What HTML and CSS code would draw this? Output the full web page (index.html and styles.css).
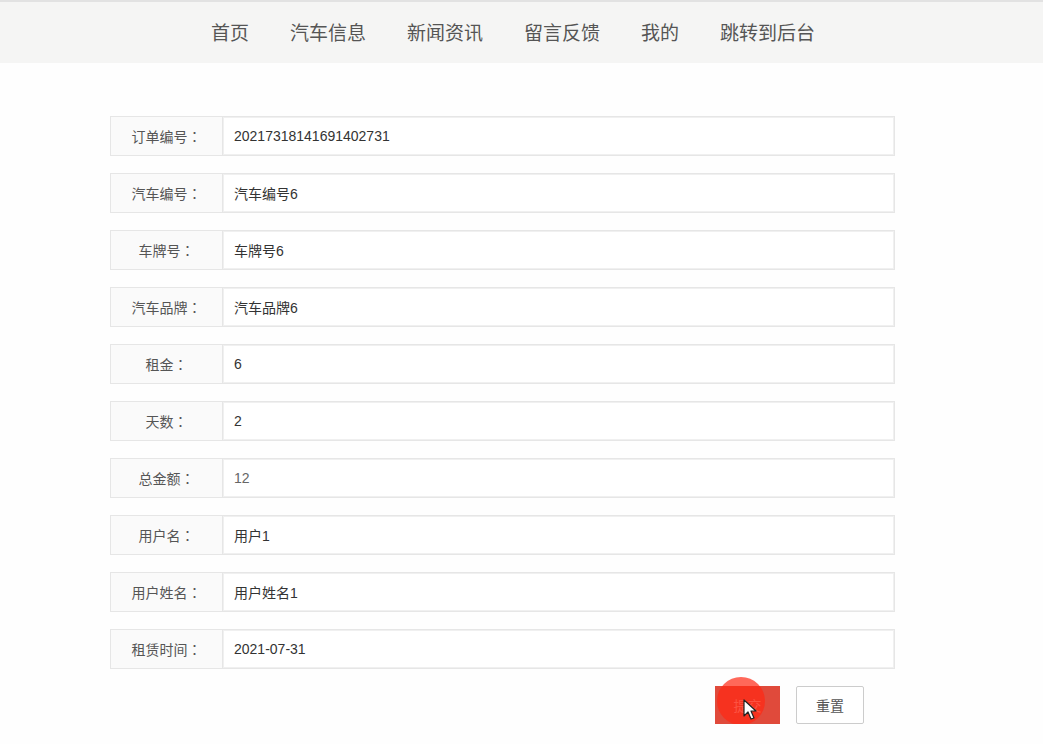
FILE: index.html
```html
<!DOCTYPE html>
<html lang="zh">
<head>
  <meta charset="UTF-8">
  <title>租赁订单</title>
  <link rel="stylesheet" href="styles.css">
</head>
<body>
  <div class="nav">
    <a class="nav-item" href="#">首页</a>
    <a class="nav-item" href="#">汽车信息</a>
    <a class="nav-item" href="#">新闻资讯</a>
    <a class="nav-item" href="#">留言反馈</a>
    <a class="nav-item" href="#">我的</a>
    <a class="nav-item" href="#">跳转到后台</a>
  </div>

  <form class="form">
    <div class="form-item">
      <label class="form-label">订单编号<span class="colon">：</span></label>
      <input class="form-input" type="text" value="20217318141691402731">
    </div>
    <div class="form-item">
      <label class="form-label">汽车编号<span class="colon">：</span></label>
      <input class="form-input" type="text" value="汽车编号6">
    </div>
    <div class="form-item">
      <label class="form-label">车牌号<span class="colon">：</span></label>
      <input class="form-input" type="text" value="车牌号6">
    </div>
    <div class="form-item">
      <label class="form-label">汽车品牌<span class="colon">：</span></label>
      <input class="form-input" type="text" value="汽车品牌6">
    </div>
    <div class="form-item">
      <label class="form-label">租金<span class="colon">：</span></label>
      <input class="form-input" type="text" value="6">
    </div>
    <div class="form-item">
      <label class="form-label">天数<span class="colon">：</span></label>
      <input class="form-input" type="text" value="2">
    </div>
    <div class="form-item">
      <label class="form-label">总金额<span class="colon">：</span></label>
      <input class="form-input readonly" type="text" value="12" readonly>
    </div>
    <div class="form-item">
      <label class="form-label">用户名<span class="colon">：</span></label>
      <input class="form-input" type="text" value="用户1">
    </div>
    <div class="form-item">
      <label class="form-label">用户姓名<span class="colon">：</span></label>
      <input class="form-input" type="text" value="用户姓名1">
    </div>
    <div class="form-item">
      <label class="form-label">租赁时间<span class="colon">：</span></label>
      <input class="form-input" type="text" value="2021-07-31">
    </div>
    <div class="form-buttons">
      <span class="btn-wrap">
        <button type="button" class="btn btn-submit">提交</button>
        <span class="click-dot"></span>
        <svg class="cursor" width="14" height="22" viewBox="0 0 14 22">
          <path d="M1 1 L1 17 L5 13 L8 20 L11 19 L8 12 L13 12 Z" fill="#fff" stroke="#222" stroke-width="1.2" stroke-linejoin="round"/>
        </svg>
      </span>
      <button type="reset" class="btn btn-reset">重置</button>
    </div>
  </form>
</body>
</html>
```

FILE: styles.css
```css
body {
  margin: 0;
  font-family: "Microsoft YaHei", "Liberation Sans", "Noto Sans CJK SC", sans-serif;
  background-color: #fefefe;
  color: #333;
}
.nav {
  display: flex;
  justify-content: center;
  gap: 41px;
  height: 61px;
  padding-right: 17px;
  border-top: 2px solid #e2e2e2;
  background-color: #f5f5f4;
  align-items: center;
}
.nav-item {
  font-size: 19px;
  color: #555;
  text-decoration: none;
  padding-bottom: 2px;
}
.form {
  width: 785px;
  margin: 53px 0 0 110px;
}
.form-item {
  display: flex;
  height: 40px;
  margin-bottom: 17px;
}
.form-label {
  width: 111px;
  flex: none;
  display: flex;
  align-items: center;
  justify-content: center;
  background-color: #fafafa;
  border: 1px solid #e6e6e6;
  font-size: 14px;
  color: #555;
}
.colon {
  font-family: "Noto Sans CJK TC", sans-serif;
}
.form-input {
  flex: 1;
  margin: 0;
  padding: 0 11px;
  border: 1px solid #e6e6e6;
  border-left: none;
  box-shadow: inset 0 0 0 1px #f0f0f0;
  background: #fff;
  font-family: inherit;
  font-size: 14px;
  color: #333;
  outline: none;
}
.form-input.readonly {
  color: #666;
}
.form-buttons {
  display: flex;
  justify-content: flex-end;
  gap: 16px;
  padding-right: 31px;
}
.btn {
  height: 38px;
  padding: 0 17px;
  font-family: inherit;
  font-size: 14px;
  cursor: pointer;
}
.btn-wrap {
  position: relative;
  display: inline-flex;
}
.btn-submit {
  width: 65px;
  border: none;
  background-color: #e04a3b;
  color: #f7b5ac;
}
.btn-reset {
  width: 68px;
  border: 1px solid #ccc;
  border-radius: 2px;
  background-color: #fff;
  color: #555;
}
.click-dot {
  position: absolute;
  left: 2px;
  top: -9px;
  width: 48px;
  height: 48px;
  border-radius: 50%;
  background-color: rgba(255, 40, 20, 0.7);
  pointer-events: none;
}
.cursor {
  position: absolute;
  left: 28px;
  top: 13px;
  pointer-events: none;
}
```
